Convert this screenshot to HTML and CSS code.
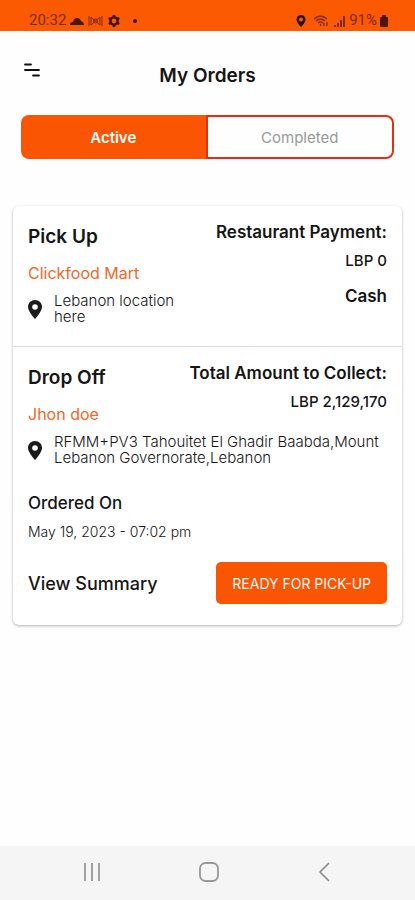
FILE: index.html
```
<!DOCTYPE html>
<html lang="en">
<head>
    <meta charset="UTF-8">
    <meta name="viewport" content="width=device-width, initial-scale=1.0">
    <title>My Orders</title>
    <link rel="stylesheet" href="styles.css">
</head>
<body>

<div class="status-bar">
    <div class="status-group">
        <span>20:32</span>
        <svg width="14" height="14" viewBox="0 0 14 14"><path d="M0 11Q0 8 3 8Q4 4 7 4Q10 4 11 7Q14 8 14 11Z" fill="#4a1800"/></svg>
        <svg width="15" height="14" viewBox="0 0 15 14" fill="none" stroke="#7c2c00"><path d="M1 2v10M3 3l9 8M3 11l9-8M14 2v10M3 3v8M12 3v8"/><circle cx="7.500" cy="7" r="2"/></svg>
        <svg class="gear" width="14" height="14" viewBox="0 0 14 14" fill="none" stroke="#3a1300"><circle cx="7" cy="7" r="3.600" stroke-width="2.400"/><path d="M7 1v2M7 11v2M1.800 4l1.700 1M10.500 9l1.700 1M1.800 10l1.700-1M10.500 5l1.700-1" stroke-width="2.600"/></svg>
        <span class="dot"></span>
    </div>
    <div class="status-group right">
        <svg class="location" width="10" height="14" viewBox="0 0 10 14"><path d="M5 1C2.500 1 .5 3 .5 5.500C.5 8.500 5 13 5 13S9.500 8.500 9.500 5.500C9.500 3 7.500 1 5 1Z" fill="#2a0d00"/><circle cx="5" cy="5.500" r="2" fill="#fb5a03"/></svg>
        <svg width="17" height="14" viewBox="0 0 17 14" fill="none" stroke="#7c2c00" stroke-width="1.300"><path d="M1 5Q7.500-1 14 5M3 7Q7.500 3 12 7M5 9Q7.500 7 10 9M7.500 10v2M11 12v-3M14 8v4"/></svg>
        <svg width="13" height="14" viewBox="0 0 13 14" fill="#7c2c00"><path d="M1 11h2v2H1zM4 9h2v4H4zM7 6h2v7H7zM10 2h2v11h-2z"/></svg>
        <span>91%</span>
        <svg width="8" height="14" viewBox="0 0 8 14"><path d="M2 1h4v2h1q1 0 1 1v8q0 1-1 1H1q-1 0-1-1V4q0-1 1-1h1z" fill="#4a1800"/></svg>
    </div>
</div>

<header class="header">
    <button class="menu" aria-label="Menu">
        <svg width="16" height="14" viewBox="0 0 16 14" stroke="#111" stroke-width="1.800" stroke-linecap="round"><path d="M1 1.500h6M1 7h14M9 12.500h6"/></svg>
    </button>
    <h1>My Orders</h1>
</header>

<main>
    <div class="tabs">
        <button class="tab active">Active</button>
        <button class="tab">Completed</button>
    </div>

    <article class="card">
        <section class="stop pickup">
            <div>
                <h2>Pick Up</h2>
                <p class="name">Clickfood Mart</p>
            </div>
            <div class="payment">
                <h3>Restaurant Payment:</h3>
                <p class="amount">LBP 0</p>
                <p class="method">Cash</p>
            </div>
            <div class="address">
                <svg width="14" height="19" viewBox="0 0 14 19"><path d="M7 0C3 0 0 3 0 7C0 11.500 7 19 7 19S14 11.500 14 7C14 3 11 0 7 0Z" fill="#1a1a1a"/><circle cx="7" cy="7" r="2.800" fill="#fff"/></svg>
                <p>Lebanon location here</p>
            </div>
        </section>

        <section class="stop dropoff">
            <div>
                <h2>Drop Off</h2>
                <p class="name">Jhon doe</p>
            </div>
            <div class="payment">
                <h3>Total Amount to Collect:</h3>
                <p class="amount">LBP 2,129,170</p>
            </div>
            <div class="address">
                <svg width="14" height="19" viewBox="0 0 14 19"><path d="M7 0C3 0 0 3 0 7C0 11.500 7 19 7 19S14 11.500 14 7C14 3 11 0 7 0Z" fill="#1a1a1a"/><circle cx="7" cy="7" r="2.800" fill="#fff"/></svg>
                <p>RFMM+PV3 Tahouitet El Ghadir Baabda,Mount Lebanon Governorate,Lebanon</p>
            </div>
        </section>

        <section class="details">
            <h4>Ordered On</h4>
            <p class="date">May 19, 2023 - 07:02 pm</p>
            <div class="actions">
                <a href="#">View Summary</a>
                <button class="ready">READY FOR PICK-UP</button>
            </div>
        </section>
    </article>
</main>

<nav class="nav-bar">
    <button aria-label="Recent apps">
        <svg width="20" height="20" viewBox="0 0 20 20" stroke="#999" stroke-width="1.800"><path d="M3 1v18M10 1v18M17 1v18"/></svg>
    </button>
    <button aria-label="Home">
        <svg width="20" height="20" viewBox="0 0 20 20" fill="none" stroke="#999" stroke-width="1.800"><rect x="1" y="1" width="18" height="18" rx="5.500"/></svg>
    </button>
    <button aria-label="Back">
        <svg width="20" height="20" viewBox="0 0 20 20" fill="none" stroke="#888" stroke-width="1.600"><path d="M14 1L5 10l9 9"/></svg>
    </button>
</nav>

</body>
</html>
```
FILE: styles.css
```
* {
    box-sizing: border-box;
}
body {
    font-family: Inter, "Noto Sans", sans-serif;
    background-color: #fefefe;
    color: #151515;
    margin: 0;
    min-height: 100vh;
    display: flex;
    flex-direction: column;
}
h1, h2, h3, h4, p {
    margin: 0;
}
button {
    font-family: inherit;
    border: none;
    background: none;
    padding: 0;
    cursor: pointer;
}
svg {
    display: block;
    flex-shrink: 0;
}
.status-bar {
    height: 31px;
    padding: 10px 27px 0 29px;
    background-color: #fb5a03;
    display: flex;
    justify-content: space-between;
    font-family: Roboto, sans-serif;
    font-size: 15px;
    line-height: 21px;
    color: #7c2c00;
}
.status-group {
    display: flex;
    align-items: center;
    gap: 4px;
}
.right {
    gap: 3px;
}
.location {
    margin-right: 4px;
}
.dot {
    width: 4px;
    height: 4px;
    margin-left: 8px;
    border-radius: 50%;
    background: #3a1300;
}
.header {
    display: grid;
    grid-template-columns: 40px 1fr 40px;
    align-items: center;
    padding: 30px 24px 25px;
}
.menu {
    width: 16px;
    height: 14px;
    margin-bottom: 12px;
}
h1 {
    font-size: 19px;
    line-height: 29px;
    font-weight: 600;
    text-align: center;
}
main {
    flex: 1;
}
.tabs {
    display: flex;
    height: 44px;
    margin: 0 21px 47px;
}
.tab {
    flex: 1;
    border: 2px solid #ec2c10;
    border-radius: 0 8px 8px 0;
    font-size: 15px;
    color: #999;
}
.active {
    background: #f95502;
    border: none;
    border-radius: 8px 0 0 8px;
    color: #fff;
    font-weight: 600;
}
.card {
    margin: 0 13px;
    background: #fff;
    border-radius: 6px;
    box-shadow: 0 1px 3px rgba(0, 0, 0, 0.3);
}
.stop {
    display: grid;
    grid-template-columns: 1fr auto;
    column-gap: 16px;
    padding: 14px 15px 0;
}
.pickup {
    padding-bottom: 21px;
    border-bottom: 1px solid #ddd;
}
.payment {
    text-align: right;
}
.pickup .payment {
    grid-row: span 2;
}
.dropoff .address {
    grid-column: span 2;
}
h2 {
    font-size: 19px;
    line-height: 34px;
    font-weight: 600;
}
h3, .method {
    font-size: 17px;
    line-height: 24px;
    font-weight: 600;
}
.name {
    margin-top: 7px;
    font-size: 16px;
    line-height: 24px;
    color: #f4662a;
}
.amount {
    margin-top: 5px;
    font-size: 15px;
    line-height: 24px;
    font-weight: 500;
}
.method {
    margin-top: 11px;
}
.address {
    display: flex;
    align-items: center;
    gap: 12px;
    margin-top: 8px;
    font-size: 15px;
    line-height: 16px;
    font-weight: 300;
}
.details {
    padding: 25px 15px 21px;
}
h4 {
    font-size: 17px;
    line-height: 24px;
    font-weight: 500;
}
.date {
    margin-top: 5px;
    font-size: 14px;
    line-height: 24px;
    font-weight: 300;
}
.actions {
    display: flex;
    justify-content: space-between;
    align-items: center;
    margin-top: 18px;
}
.actions a {
    color: inherit;
    text-decoration: none;
    font-size: 18px;
    font-weight: 500;
}
.ready {
    height: 42px;
    padding: 0 16px;
    border-radius: 5px;
    background: #f95502;
    color: #fff;
    font-size: 14px;
}
.nav-bar {
    display: flex;
    justify-content: space-between;
    align-items: center;
    height: 54px;
    padding: 0 80px 2px 82px;
    background: #f5f5f5;
}
```
